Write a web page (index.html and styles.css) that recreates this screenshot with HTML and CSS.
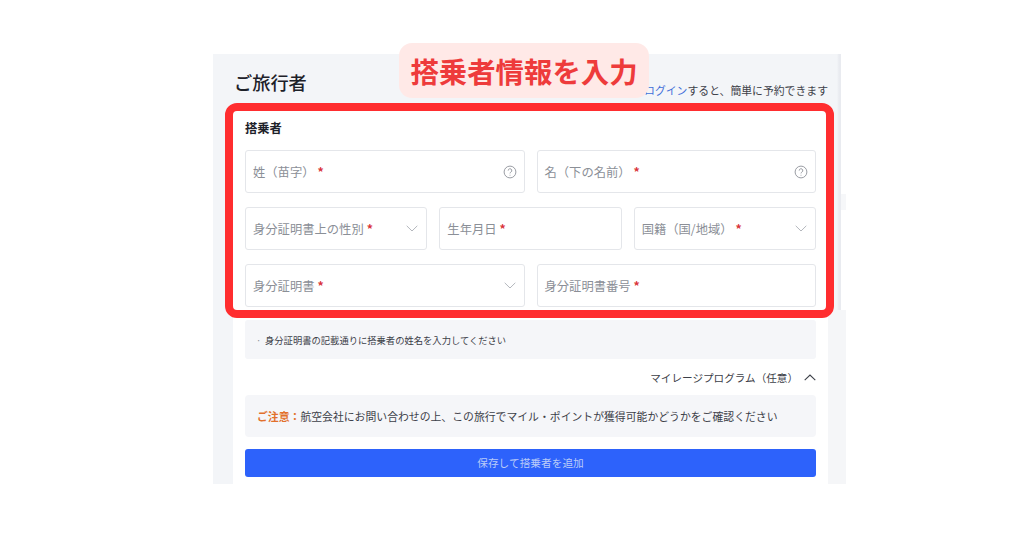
FILE: index.html
```html
<!DOCTYPE html>
<html lang="ja">
<head>
<meta charset="utf-8">
<title>搭乗者情報を入力</title>
<link rel="stylesheet" href="styles.css">
</head>
<body>
<main class="panel">
  <header class="panel-head">
    <h1 class="panel-title">ご旅行者</h1>
    <p class="login-note"><a class="login-link">ログイン</a>すると、簡単に予約できます</p>
  </header>
  <section class="card">
    <h2 class="card-title">搭乗者</h2>
    <div class="row row-2">
      <div class="field"><span class="label">姓（苗字）<i class="req req-wide">*</i></span>
        <svg class="help" viewBox="0 0 14 14"><circle cx="7" cy="7" r="5.9"/><path d="M5.2 5.6a1.8 1.8 0 1 1 2.7 1.5c-.6.4-.9.7-.9 1.3"/><path d="M7 9.8v.8"/></svg></div>
      <div class="field"><span class="label">名（下の名前）<i class="req req-wide">*</i></span>
        <svg class="help" viewBox="0 0 14 14"><circle cx="7" cy="7" r="5.9"/><path d="M5.2 5.6a1.8 1.8 0 1 1 2.7 1.5c-.6.4-.9.7-.9 1.3"/><path d="M7 9.8v.8"/></svg></div>
    </div>
    <div class="row row-3">
      <div class="field"><span class="label">身分証明書上の性別<i class="req">*</i></span>
        <svg class="chev" viewBox="0 0 12 7"><path d="M.7.8 6 6l5.3-5.2"/></svg></div>
      <div class="field"><span class="label">生年月日<i class="req">*</i></span></div>
      <div class="field"><span class="label">国籍（国/地域）<i class="req req-wide">*</i></span>
        <svg class="chev" viewBox="0 0 12 7"><path d="M.7.8 6 6l5.3-5.2"/></svg></div>
    </div>
    <div class="row row-2">
      <div class="field"><span class="label">身分証明書<i class="req">*</i></span>
        <svg class="chev" viewBox="0 0 12 7"><path d="M.7.8 6 6l5.3-5.2"/></svg></div>
      <div class="field"><span class="label">身分証明書番号<i class="req">*</i></span></div>
    </div>
    <div class="info"><span class="info-dot">·</span>身分証明書の記載通りに搭乗者の姓名を入力してください</div>
    <div class="mileage">マイレージプログラム（任意）
      <svg class="chev-up" viewBox="0 0 12 7"><path d="M.7 6.2 6 1l5.3 5.2"/></svg></div>
    <div class="notice"><b class="notice-key">ご注意：</b>航空会社にお問い合わせの上、この旅行でマイル・ポイントが獲得可能かどうかをご確認ください</div>
    <button class="submit" type="button">保存して搭乗者を追加</button>
  </section>
  <div class="side-bump"></div>
  <div class="side-ext"></div>
  <div class="frame"></div>
  <div class="badge">搭乗者情報を入力</div>
</main>
</body>
</html>
```
FILE: styles.css
```css
* { box-sizing: border-box; }
html, body { margin: 0; height: 100%; }
body {
  background: #fff;
  padding: 54px 0 0 213px;
  font-family: "Noto Sans CJK JP", "Noto Sans", sans-serif;
  overflow: hidden;
}
.panel {
  position: relative;
  width: 628px;
  height: 430px;
  background: linear-gradient(to right, #f3f5f8 0, #f3f5f8 624px, #e9ebf0 626px);
  display: flex;
  flex-direction: column;
}
.panel-head {
  height: 51px;
  flex: none;
  margin: 0 13px 0 20px;
  display: flex;
  justify-content: space-between;
}
.panel-title {
  margin: 15px 0 0 1px;
  font-size: 18.2px;
  line-height: 27px;
  font-weight: 500;
  color: #1d2129;
}
.login-note {
  margin: 26px 0 0;
  font-size: 10.85px;
  line-height: 20px;
  color: #3c4048;
}
.login-link { color: #3f6fd8; }
.card {
  flex: 1;
  margin: 0 13px 0 20px;
  padding: 14px 12px 0;
  background: #fff;
  display: flex;
  flex-direction: column;
}
.card-title {
  margin: 0 0 12px;
  height: 19px;
  font-size: 12.3px;
  line-height: 19px;
  font-weight: 700;
  color: #1d2129;
}
.row { display: grid; gap: 12px; margin-bottom: 14px; }
.row-2 { grid-template-columns: 1fr 1fr; }
.row-3 { grid-template-columns: 1fr 1fr 1fr; }
.field {
  height: 43px;
  padding: 0 8px 0 7px;
  border: 1px solid #e4e6ea;
  border-radius: 3px;
  background: #fff;
  display: flex;
  align-items: center;
  justify-content: space-between;
}
.label { font-size: 12.3px; color: #8b8f97; white-space: nowrap; }
.req {
  margin-left: 3px;
  font-style: normal;
  font-weight: 700;
  color: #d9333a;
}
.req-wide { margin-left: 3px; }
.help {
  width: 14px;
  height: 14px;
  margin-right: -1px;
  fill: none;
  stroke: #9a9da4;
  stroke-width: 1;
}
.chev {
  width: 12px;
  height: 7px;
  fill: none;
  stroke: #b4b7bd;
  stroke-width: 1;
}
.info {
  height: 39px;
  margin-top: -1px;
  padding-left: 11px;
  background: #f5f6f9;
  border-radius: 3px;
  display: flex;
  align-items: center;
  font-size: 9.3px;
  color: #3c4048;
}
.info-dot { width: 9px; color: #8b8f97; }
.mileage {
  height: 36px;
  display: flex;
  align-items: center;
  justify-content: flex-end;
  gap: 6px;
  font-size: 10.6px;
  color: #3c4048;
}
.chev-up {
  width: 12px;
  height: 7px;
  fill: none;
  stroke: #3c4048;
  stroke-width: 1.1;
}
.notice {
  height: 42px;
  padding-left: 12px;
  background: #f5f6f9;
  border-radius: 4px;
  display: flex;
  align-items: center;
  font-size: 10.85px;
  color: #3c4048;
  white-space: nowrap;
}
.notice-key { color: #e2702c; font-weight: 700; }
.submit {
  height: 28px;
  margin-top: 12px;
  padding: 0 0 2px;
  border: 0;
  border-radius: 3px;
  background: #2d62fb;
  color: #b9cbf8;
  font: inherit;
  font-size: 10.7px;
}
.side-bump {
  position: absolute;
  left: 628px;
  top: 140px;
  width: 5px;
  height: 16px;
  background: #f6f7f9;
}
.side-ext {
  position: absolute;
  left: 615px;
  top: 256px;
  width: 18px;
  height: 174px;
  background: #f5f6f8;
}
.frame {
  position: absolute;
  left: 12px;
  top: 49px;
  width: 609px;
  height: 215px;
  border: 8px solid #ff2d2f;
  border-radius: 12px;
}
.badge {
  position: absolute;
  left: 186px;
  top: -11px;
  width: 250px;
  height: 55px;
  padding-top: 7px;
  background: #ffe9e7;
  border-radius: 13px;
  text-align: center;
  font-size: 28.4px;
  line-height: 42px;
  font-weight: 700;
  color: #ee3b3b;
  white-space: nowrap;
}
```
